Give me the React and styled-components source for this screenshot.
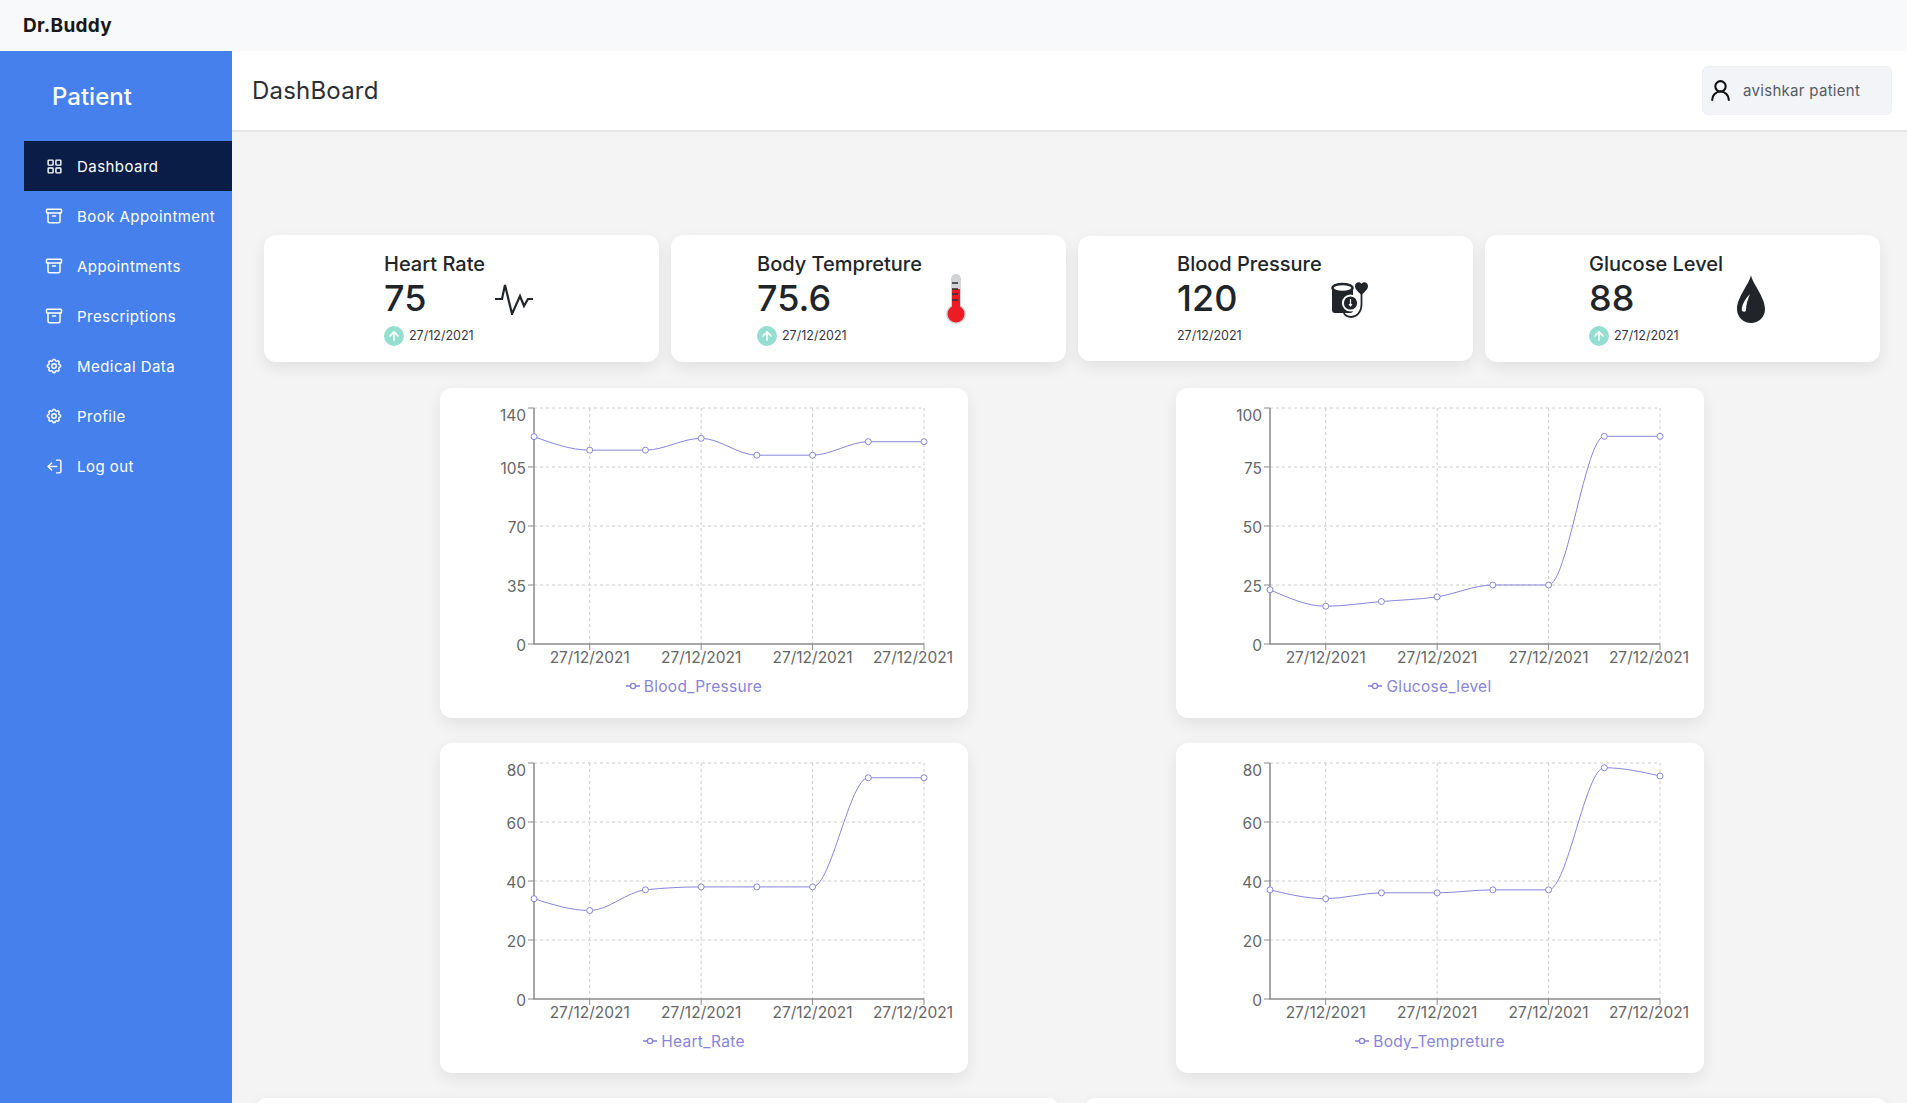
import React from 'react'
import styled, { createGlobalStyle } from 'styled-components'
import { LayoutGrid, Archive, LogOut, UserRound, ArrowUp } from 'lucide-react'
import { HiOutlineCog } from 'react-icons/hi'

const GlobalStyle = createGlobalStyle`
    * { box-sizing: border-box; }
    html, body { margin: 0; padding: 0; }
    body {
        font-family: Inter, "Noto Sans", "Liberation Sans", sans-serif;
        background: #f4f4f4;
        color: #212529;
        overflow: hidden;
    }
`

const navItems = [
    { label: 'Dashboard', icon: <LayoutGrid size={17} strokeWidth={2} />, active: true },
    { label: 'Book Appointment', icon: <Archive size={18} strokeWidth={2} /> },
    { label: 'Appointments', icon: <Archive size={18} strokeWidth={2} /> },
    { label: 'Prescriptions', icon: <Archive size={18} strokeWidth={2} /> },
    { label: 'Medical Data', icon: <HiOutlineCog size={18} /> },
    { label: 'Profile', icon: <HiOutlineCog size={18} /> },
    { label: 'Log out', icon: <LogOut size={17} strokeWidth={2} style={{ transform: 'scaleX(-1)' }} /> },
]

const PulseIcon = () => (
    <svg width="39" height="32" viewBox="0 0 39 32">
        <polyline
            points="0,16 7,16 10,2 17,31 25,13 29,23 33,16 38,16"
            fill="none"
            stroke="#212529"
            strokeWidth="2.2"
        />
    </svg>
)

const ThermometerIcon = () => (
    <svg width="24" height="52" viewBox="0 0 24 52">
        <rect x="7" y="1" width="10" height="40" rx="5" fill="#d1d3d4" />
        <circle cx="12" cy="41" r="10" fill="#d1d3d4" />
        <rect x="8" y="16" width="8" height="26" fill="#ed1c24" />
        <circle cx="12" cy="41" r="8.5" fill="#ed1c24" />
        <path d="M8 10h6M8 16h6M8 21h6M8 27h6" stroke="#2b3036" strokeWidth="1.6" />
    </svg>
)

const PressureIcon = () => (
    <svg width="40" height="40" viewBox="0 0 40 40">
        <rect x="2" y="9" width="21" height="25" rx="3" fill="#212529" />
        <ellipse cx="12.5" cy="9" rx="10" ry="4" fill="#fff" stroke="#212529" strokeWidth="2.4" />
        <circle cx="20.5" cy="24" r="8.6" fill="#fff" />
        <circle cx="20.5" cy="24" r="6.6" fill="#212529" />
        <path d="M20.5 20v6M19 25l1.5 2 1.5-2" stroke="#fff" strokeWidth="1.2" fill="none" />
        <path d="M31.5 14v11c0 8-5 13-10 13s-7-2-8-5" fill="none" stroke="#212529" strokeWidth="1.8" />
        <path d="M31.5 16C27 12 25 9.500 25 7c0-4 5-5 6.500-2C33 2 38 3 38 7c0 2.500-2 5-6.500 9z" fill="#212529" />
    </svg>
)

const DropIcon = () => (
    <svg width="28" height="48" viewBox="0 0 28 48">
        <path d="M14 0C15 8 28 22 28 34A14 14 0 0 1 0 34C0 22 13 8 14 0Z" fill="#212529" />
        <path d="M13 19C8 24 4 31 5 36C7 37 9 37 9 35C9 29 11 24 13 19Z" fill="#fff" />
    </svg>
)

const stats = [
    { title: 'Heart Rate', value: '75', pad: 120, width: 111, icon: <PulseIcon />, up: true },
    { title: 'Body Temprature', display: 'Body Temprature', value: '75.6', pad: 86, width: 187, icon: <ThermometerIcon />, up: true },
    { title: 'Blood Pressure', value: '120', pad: 99, width: 153, icon: <PressureIcon />, short: true },
    { title: 'Glucose Level', value: '88', pad: 104, width: 148, icon: <DropIcon />, up: true },
]
stats[1].title = 'Body Tempreture'

const charts = [
    { name: 'Blood_Pressure', ticks: [0, 35, 70, 105, 140], max: 140, data: [123, 115, 115, 122, 112, 112, 120, 120] },
    { name: 'Glucose_level', ticks: [0, 25, 50, 75, 100], max: 100, data: [23, 16, 18, 20, 25, 25, 88, 88] },
    { name: 'Heart_Rate', ticks: [0, 20, 40, 60, 80], max: 80, data: [34, 30, 37, 38, 38, 38, 75, 75] },
    { name: 'Body_Tempreture', ticks: [0, 20, 40, 60, 80], max: 80, data: [37, 34, 36, 36, 37, 37, 78.4, 75.6] },
]

const plot = { left: 90, right: 480, top: 20, bottom: 256 }

// same curve as recharts' "monotone" line
const monotonePath = (pts) => {
    const slopes = []
    for (let i = 0; i < pts.length - 1; i++) {
        slopes.push((pts[i + 1][1] - pts[i][1]) / (pts[i + 1][0] - pts[i][0]))
    }
    const tangents = pts.map((p, i) => {
        if (i === 0 || i === pts.length - 1) return 0
        const h0 = p[0] - pts[i - 1][0]
        const h1 = pts[i + 1][0] - p[0]
        const s0 = slopes[i - 1]
        const s1 = slopes[i]
        const m = (s0 * h1 + s1 * h0) / (h0 + h1)
        return (Math.sign(s0) + Math.sign(s1)) * Math.min(Math.abs(s0), Math.abs(s1), 0.5 * Math.abs(m))
    })
    const last = pts.length - 1
    tangents[0] = (3 * slopes[0] - tangents[1]) / 2
    tangents[last] = (3 * slopes[last - 1] - tangents[last - 1]) / 2
    let d = `M${pts[0][0]},${pts[0][1]}`
    for (let i = 0; i < last; i++) {
        const dx = (pts[i + 1][0] - pts[i][0]) / 3
        d += `C${pts[i][0] + dx},${pts[i][1] + dx * tangents[i]},${pts[i + 1][0] - dx},${pts[i + 1][1] - dx * tangents[i + 1]},${pts[i + 1][0]},${pts[i + 1][1]}`
    }
    return d
}

const LineChart = ({ chart }) => {
    const stepX = (plot.right - plot.left) / 7
    const toY = (v) => plot.bottom - (v / chart.max) * (plot.bottom - plot.top)
    const pts = chart.data.map((v, i) => [plot.left + i * stepX, toY(v)])
    const gridX = [1, 3, 5, 7].map((i) => plot.left + i * stepX)

    return (
        <ChartSvg width="520" height="288" viewBox="0 0 520 288">
            {chart.ticks.slice(1).map((t) => (
                <line key={t} x1={plot.left} x2={plot.right} y1={toY(t)} y2={toY(t)} stroke="#ccc" strokeDasharray="3 3" />
            ))}
            {gridX.map((x) => (
                <line key={x} x1={x} x2={x} y1={plot.top} y2={plot.bottom} stroke="#ccc" strokeDasharray="3 3" />
            ))}
            <path d={`M${plot.left} ${plot.top}V${plot.bottom}H${plot.right}`} fill="none" stroke="#8a8a8a" strokeWidth="1.5" />
            {chart.ticks.map((t, i) => (
                <g key={t}>
                    <line x1={plot.left - 6} x2={plot.left} y1={toY(t)} y2={toY(t)} stroke="#8a8a8a" />
                    <text x={plot.left - 8} y={toY(t) + (i === chart.ticks.length - 1 ? 7 : 1)} dy="0.355em" textAnchor="end" fill="#666">
                        {t}
                    </text>
                </g>
            ))}
            {gridX.map((x, i) => (
                <g key={x}>
                    <line x1={x} x2={x} y1={plot.bottom} y2={plot.bottom + 6} stroke="#8a8a8a" />
                    <text x={i === 3 ? x - 11 : x} y={269} dy="0.355em" textAnchor="middle" fill="#666">
                        27/12/2021
                    </text>
                </g>
            ))}
            <path d={monotonePath(pts)} fill="none" stroke="#8884d8" />
            {pts.map((p) => (
                <circle key={p[0]} cx={p[0]} cy={p[1]} r="3" fill="#fff" stroke="#8884d8" />
            ))}
        </ChartSvg>
    )
}

const App = () => {
    return (
        <Page>
            <GlobalStyle />
            <TopBar>
                <Brand>Dr.Buddy</Brand>
            </TopBar>
            <Body>
                <Sidebar>
                    <SideTitle>Patient</SideTitle>
                    <NavList>
                        {navItems.map((item) => (
                            <NavItem key={item.label} $active={item.active}>
                                <NavIcon>{item.icon}</NavIcon>
                                <span>{item.label}</span>
                            </NavItem>
                        ))}
                    </NavList>
                </Sidebar>
                <Main>
                    <Header>
                        <HeaderTitle>DashBoard</HeaderTitle>
                        <UserButton>
                            <UserRound size={25} strokeWidth={2} color="#111" />
                            <span>avishkar patient</span>
                        </UserButton>
                    </Header>
                    <Content>
                        <StatRow>
                            {stats.map((s) => (
                                <StatCard key={s.title} $pad={s.pad} $short={s.short}>
                                    <StatText $width={s.width}>
                                        <StatTitle>{s.title}</StatTitle>
                                        <StatValue>{s.value}</StatValue>
                                        <StatDate>
                                            {s.up && (
                                                <UpBadge>
                                                    <ArrowUp size={14} strokeWidth={3} color="#fff" />
                                                </UpBadge>
                                            )}
                                            <span>27/12/2021</span>
                                        </StatDate>
                                    </StatText>
                                    {s.icon}
                                </StatCard>
                            ))}
                        </StatRow>
                        <ChartGrid>
                            {charts.map((c) => (
                                <ChartCard key={c.name}>
                                    <LineChart chart={c} />
                                    <Legend>
                                        <svg width="14" height="14" viewBox="0 0 14 14">
                                            <line x1="0" x2="14" y1="7" y2="7" stroke="#8884d8" strokeWidth="1.6" />
                                            <circle cx="7" cy="7" r="2.6" fill="#fff" stroke="#8884d8" strokeWidth="1.4" />
                                        </svg>
                                        <span>{c.name}</span>
                                    </Legend>
                                </ChartCard>
                            ))}
                        </ChartGrid>
                        <BottomRow>
                            <BottomCard />
                            <BottomCard />
                        </BottomRow>
                    </Content>
                </Main>
            </Body>
        </Page>
    )
}

const Page = styled.div`
    height: 100vh;
    overflow: hidden;
    display: flex;
    flex-direction: column;
`

const TopBar = styled.div`
    height: 51px;
    flex-shrink: 0;
    background: #f8f9fa;
    display: flex;
    align-items: center;
    padding-left: 23px;
`

const Brand = styled.div`
    font-size: 19px;
    font-weight: 700;
    letter-spacing: 0.3px;
    color: #16181b;
`

const Body = styled.div`
    flex: 1;
    display: flex;
    min-height: 0;
`

const Sidebar = styled.div`
    width: 232px;
    flex-shrink: 0;
    background: #4580ec;
    color: #fff;
`

const SideTitle = styled.div`
    height: 90px;
    display: flex;
    align-items: center;
    padding-left: 52px;
    font-size: 24px;
    font-weight: 500;
`

const NavList = styled.div`
    display: flex;
    flex-direction: column;
    padding-left: 24px;
`

const NavItem = styled.div`
    height: 50px;
    display: flex;
    align-items: center;
    gap: 14px;
    padding-left: 21px;
    font-size: 15px;
    letter-spacing: 0.45px;
    white-space: nowrap;
    color: #fff;
    background: ${(p) => (p.$active ? '#0a1d46' : 'transparent')};
`

const NavIcon = styled.span`
    width: 18px;
    display: flex;
    align-items: center;
    justify-content: center;
`

const Main = styled.div`
    flex: 1;
    min-width: 0;
    display: flex;
    flex-direction: column;
`

const Header = styled.div`
    height: 81px;
    flex-shrink: 0;
    background: #fff;
    border-bottom: 2px solid #e6e6e6;
    display: flex;
    align-items: center;
    justify-content: space-between;
    padding: 0 15px 0 20px;
`

const HeaderTitle = styled.div`
    font-size: 24px;
    letter-spacing: 0.2px;
    color: #2b2f33;
`

const UserButton = styled.div`
    width: 190px;
    height: 49px;
    background: #f3f4f8;
    border: 1px solid #eeeff2;
    border-radius: 6px;
    display: flex;
    align-items: center;
    gap: 10px;
    padding-left: 4px;
    font-size: 15px;
    letter-spacing: 0.3px;
    color: #555b60;
    & svg { margin-left: 1px; }
`

const Content = styled.div`
    padding-top: 103px;
`

const StatRow = styled.div`
    display: grid;
    grid-template-columns: repeat(4, 395px);
    gap: 12px;
    padding-left: 32px;
    align-items: center;
`

const StatCard = styled.div`
    height: ${(p) => (p.$short ? '125px' : '127px')};
    background: #fff;
    border-radius: 12px;
    box-shadow: 0 6px 16px rgba(0, 0, 0, 0.08);
    display: flex;
    align-items: center;
    padding-left: ${(p) => p.$pad}px;
`

const StatText = styled.div`
    width: ${(p) => p.$width}px;
    flex-shrink: 0;
    display: flex;
    flex-direction: column;
`

const StatTitle = styled.div`
    font-size: 20px;
    line-height: 24px;
    font-weight: 500;
    white-space: nowrap;
    color: #212529;
`

const StatValue = styled.div`
    font-size: 36px;
    line-height: 44px;
    font-weight: 500;
    color: #212529;
`

const StatDate = styled.div`
    margin-top: 6px;
    height: 20px;
    display: flex;
    align-items: center;
    gap: 5px;
    font-size: 12.5px;
    color: #33383d;
`

const UpBadge = styled.span`
    width: 20px;
    height: 20px;
    border-radius: 50%;
    background: #95dfd0;
    display: flex;
    align-items: center;
    justify-content: center;
`

const ChartGrid = styled.div`
    margin-top: 26px;
    display: grid;
    grid-template-columns: 528px 528px;
    column-gap: 208px;
    row-gap: 25px;
    padding-left: 208px;
`

const ChartCard = styled.div`
    height: 330px;
    background: #fff;
    border-radius: 12px;
    box-shadow: 0 6px 16px rgba(0, 0, 0, 0.08);
    padding-left: 4px;
`

const ChartSvg = styled.svg`
    display: block;
    font-size: 15.5px;
`

const Legend = styled.div`
    width: 500px;
    height: 20px;
    display: flex;
    align-items: center;
    justify-content: center;
    gap: 4px;
    font-size: 15.5px;
    letter-spacing: 0.3px;
    color: #8884d8;
`

const BottomRow = styled.div`
    margin-top: 25px;
    display: grid;
    grid-template-columns: 805px 805px;
    gap: 23px;
    padding-left: 23px;
`

const BottomCard = styled.div`
    height: 300px;
    background: #fff;
    border-radius: 12px;
    box-shadow: 0 6px 16px rgba(0, 0, 0, 0.08);
`

export default App
